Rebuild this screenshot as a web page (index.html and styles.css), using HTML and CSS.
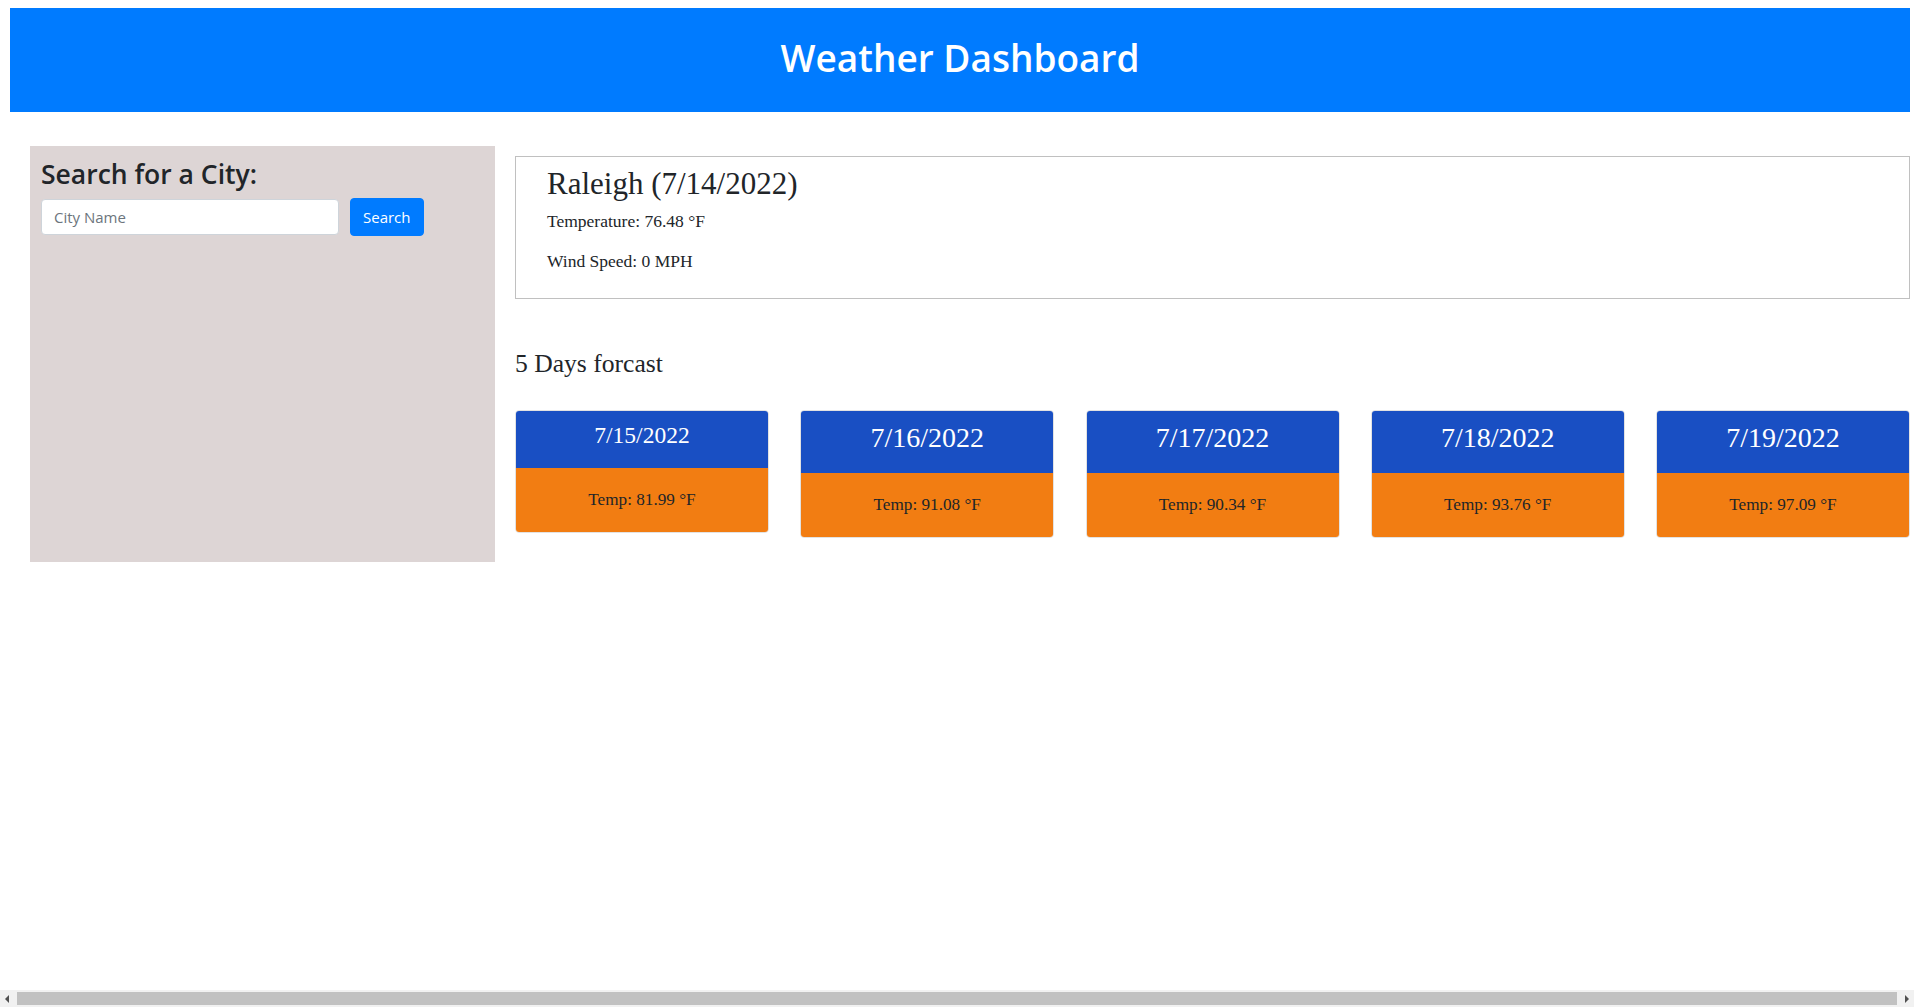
FILE: index.html
```html
<!DOCTYPE html>
<html lang="en">
<head>
<meta charset="utf-8">
<title>Weather Dashboard</title>
<link rel="stylesheet" href="styles.css">
</head>
<body>
<header class="topbar">
  <h1 class="topbar-title">Weather Dashboard</h1>
</header>
<div class="layout">
  <aside class="search-panel">
    <h3 class="search-title">Search for a City:</h3>
    <form class="search-form">
      <input class="search-input" type="text" placeholder="City Name">
      <button class="search-btn" type="button">Search</button>
    </form>
  </aside>
  <main class="content">
    <section class="current">
      <h2 class="current-title">Raleigh (7/14/2022)</h2>
      <p class="current-line">Temperature: 76.48 °F</p>
      <p class="current-line">Wind Speed: 0 MPH</p>
    </section>
    <h4 class="forecast-title">5 Days forcast</h4>
    <div class="forecast">
      <div class="card">
        <div class="card-head card-head-small"><h5 class="card-date card-date-small">7/15/2022</h5></div>
        <div class="card-body"><p class="card-temp">Temp: 81.99 °F</p></div>
      </div>
      <div class="card">
        <div class="card-head"><h4 class="card-date">7/16/2022</h4></div>
        <div class="card-body"><p class="card-temp">Temp: 91.08 °F</p></div>
      </div>
      <div class="card">
        <div class="card-head"><h4 class="card-date">7/17/2022</h4></div>
        <div class="card-body"><p class="card-temp">Temp: 90.34 °F</p></div>
      </div>
      <div class="card">
        <div class="card-head"><h4 class="card-date">7/18/2022</h4></div>
        <div class="card-body"><p class="card-temp">Temp: 93.76 °F</p></div>
      </div>
      <div class="card">
        <div class="card-head"><h4 class="card-date">7/19/2022</h4></div>
        <div class="card-body"><p class="card-temp">Temp: 97.09 °F</p></div>
      </div>
    </div>
  </main>
</div>
<div class="hscroll">
  <span class="hscroll-arrow hscroll-left"></span>
  <span class="hscroll-thumb"></span>
  <span class="hscroll-arrow hscroll-right"></span>
</div>
</body>
</html>
```
FILE: styles.css
```css
html, body {
  overflow: hidden;
}

body {
  margin: 8px 4px 0 10px;
  font-family: "Liberation Serif", "Times New Roman", serif;
  color: #212529;
  background: #fff;
}

.topbar {
  height: 104px;
  box-sizing: border-box;
  padding-bottom: 4px;
  background: #007bff;
  display: flex;
  align-items: center;
  justify-content: center;
}

.topbar-title {
  margin: 0;
  font-family: "Open Sans", "Noto Sans", sans-serif;
  font-weight: 600;
  font-size: 37px;
  line-height: 1.2;
  color: #fff;
}

.layout {
  display: flex;
  align-items: flex-start;
  gap: 20px;
  padding: 34px 0 0 20px;
}

.search-panel {
  flex-shrink: 0;
  width: 465px;
  height: 416px;
  box-sizing: border-box;
  padding: 12px 11px 10px;
  background: #ddd5d5;
}

.search-title {
  margin: 0 0 6px;
  font-family: "Open Sans", "Noto Sans", sans-serif;
  font-weight: 600;
  font-size: 26.5px;
  line-height: 33.6px;
  color: #212529;
}

.search-form {
  display: flex;
  align-items: center;
  gap: 11px;
  margin: 0;
}

.search-input {
  width: 298px;
  height: 36px;
  box-sizing: border-box;
  margin: 0;
  padding: 0 12px;
  border: 1px solid #ced4da;
  border-radius: 4px;
  background: #fff;
  font-family: "Open Sans", "Noto Sans", sans-serif;
  font-size: 15px;
  color: #495057;
  outline: none;
}

.search-input::placeholder {
  color: #6c757d;
}

.search-btn {
  height: 38px;
  box-sizing: border-box;
  margin: 0;
  padding: 0 12px;
  border: 1px solid #007bff;
  border-radius: 4px;
  background: #007bff;
  color: #fff;
  font-family: "Open Sans", "Noto Sans", sans-serif;
  font-size: 15px;
}

.content {
  flex: 1;
  min-width: 0;
  margin-top: 10px;
}

.current {
  border: 1px solid #c0c0c0;
  padding: 9px 30px 9px 31px;
}

.current-title {
  margin: 0 0 7px;
  font-size: 31px;
  line-height: 36px;
  font-weight: 400;
  color: #212529;
}

.current-line {
  margin: 0 0 16px;
  font-size: 17.5px;
  line-height: 24px;
}

.forecast-title {
  margin: 50px 0 31px;
  font-size: 25.6px;
  line-height: 30px;
  font-weight: 400;
}

.forecast {
  display: flex;
  justify-content: space-between;
  align-items: flex-start;
}

.card {
  width: 254px;
  box-sizing: border-box;
  border: 1px solid #e2e2e2;
  border-radius: 4px;
  overflow: hidden;
  background: #fff;
}

.card-head {
  background: #194fc3;
  padding: 12px 20px 21px;
  text-align: center;
}

.card-date {
  margin: 0;
  font-size: 28px;
  line-height: 29px;
  font-weight: 400;
  color: #fff;
}

.card-date-small {
  font-size: 23.5px;
  line-height: 24px;
}

.card-body {
  background: #f27d12;
  padding: 20px;
  text-align: center;
}

.card-temp {
  margin: 0;
  font-size: 17.2px;
  line-height: 24px;
  color: #212529;
}

.hscroll {
  position: fixed;
  left: 0;
  right: 0;
  bottom: 0;
  height: 17px;
  background: #f1f1f1;
}

.hscroll-thumb {
  position: absolute;
  left: 17px;
  right: 17px;
  top: 2px;
  height: 13px;
  background: #c1c1c1;
}

.hscroll-arrow {
  position: absolute;
  top: 5px;
  width: 0;
  height: 0;
  border-top: 4px solid transparent;
  border-bottom: 4px solid transparent;
}

.hscroll-left {
  left: 5px;
  border-right: 4px solid #505050;
}

.hscroll-right {
  right: 5px;
  border-left: 4px solid #505050;
}
```
